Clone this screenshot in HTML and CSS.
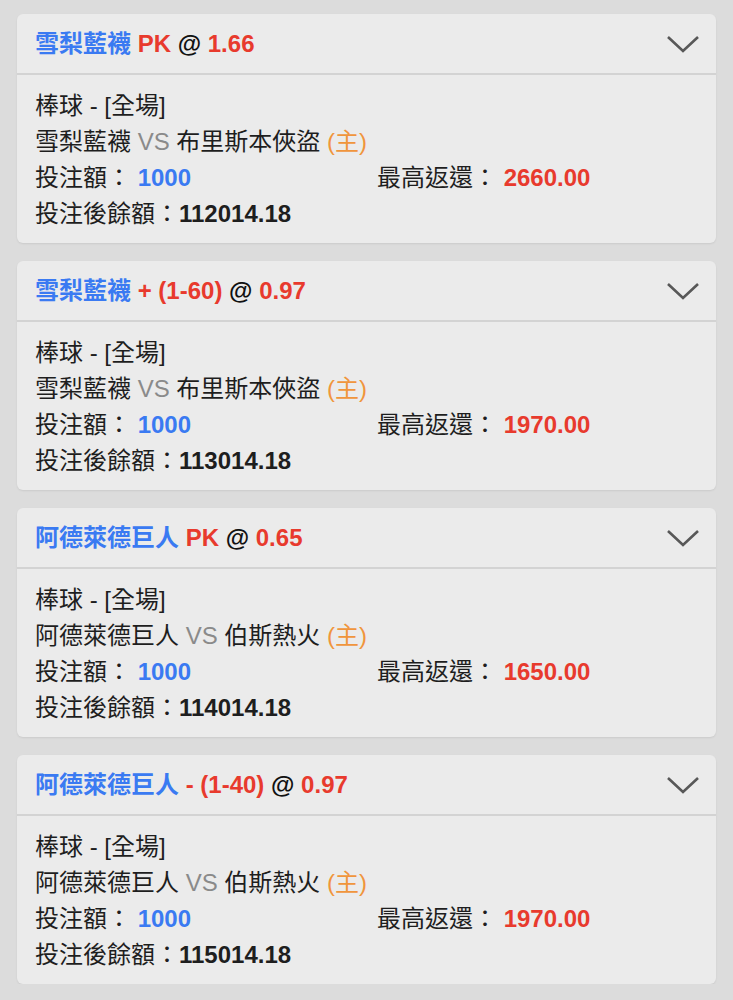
FILE: index.html
```html
<!DOCTYPE html>
<html lang="zh-Hant">
<head>
<meta charset="utf-8">
<link rel="stylesheet" href="styles.css">
</head>
<body>
<div class="list">
  <div class="card">
    <div class="head">
      <div class="title"><span class="blue">雪梨藍襪</span> <span class="red">PK</span> <span class="dark">@</span> <span class="red">1.66</span></div>
      <svg class="chev" viewBox="0 0 34 20" width="34" height="20"><path d="M2 3 L17 17 L32 3" fill="none" stroke="#585858" stroke-width="2.6"/></svg>
    </div>
    <div class="body">
      <div class="line">棒球 - [全場]</div>
      <div class="line">雪梨藍襪 <span class="vs">VS</span> 布里斯本俠盜 <span class="home">(主)</span></div>
      <div class="grid">
        <div class="line">投注額： <b class="blue">1000</b></div>
        <div class="line">最高返還： <b class="red">2660.00</b></div>
      </div>
      <div class="line">投注後餘額：<b>112014.18</b></div>
    </div>
  </div>

  <div class="card">
    <div class="head">
      <div class="title"><span class="blue">雪梨藍襪</span> <span class="red">+ (1-60)</span> <span class="dark">@</span> <span class="red">0.97</span></div>
      <svg class="chev" viewBox="0 0 34 20" width="34" height="20"><path d="M2 3 L17 17 L32 3" fill="none" stroke="#585858" stroke-width="2.6"/></svg>
    </div>
    <div class="body">
      <div class="line">棒球 - [全場]</div>
      <div class="line">雪梨藍襪 <span class="vs">VS</span> 布里斯本俠盜 <span class="home">(主)</span></div>
      <div class="grid">
        <div class="line">投注額： <b class="blue">1000</b></div>
        <div class="line">最高返還： <b class="red">1970.00</b></div>
      </div>
      <div class="line">投注後餘額：<b>113014.18</b></div>
    </div>
  </div>

  <div class="card">
    <div class="head">
      <div class="title"><span class="blue">阿德萊德巨人</span> <span class="red">PK</span> <span class="dark">@</span> <span class="red">0.65</span></div>
      <svg class="chev" viewBox="0 0 34 20" width="34" height="20"><path d="M2 3 L17 17 L32 3" fill="none" stroke="#585858" stroke-width="2.6"/></svg>
    </div>
    <div class="body">
      <div class="line">棒球 - [全場]</div>
      <div class="line">阿德萊德巨人 <span class="vs">VS</span> 伯斯熱火 <span class="home">(主)</span></div>
      <div class="grid">
        <div class="line">投注額： <b class="blue">1000</b></div>
        <div class="line">最高返還： <b class="red">1650.00</b></div>
      </div>
      <div class="line">投注後餘額：<b>114014.18</b></div>
    </div>
  </div>

  <div class="card">
    <div class="head">
      <div class="title"><span class="blue">阿德萊德巨人</span> <span class="red">- (1-40)</span> <span class="dark">@</span> <span class="red">0.97</span></div>
      <svg class="chev" viewBox="0 0 34 20" width="34" height="20"><path d="M2 3 L17 17 L32 3" fill="none" stroke="#585858" stroke-width="2.6"/></svg>
    </div>
    <div class="body">
      <div class="line">棒球 - [全場]</div>
      <div class="line">阿德萊德巨人 <span class="vs">VS</span> 伯斯熱火 <span class="home">(主)</span></div>
      <div class="grid">
        <div class="line">投注額： <b class="blue">1000</b></div>
        <div class="line">最高返還： <b class="red">1970.00</b></div>
      </div>
      <div class="line">投注後餘額：<b>115014.18</b></div>
    </div>
  </div>
</div>
</body>
</html>
```

FILE: styles.css
```css
html, body {
  margin: 0;
  padding: 0;
  background: #dcdcdc;
}
body {
  font-family: "Liberation Sans", "Noto Sans CJK TC", sans-serif;
  font-size: 24px;
  color: #1e1e1e;
}
.list {
  display: flex;
  flex-direction: column;
  gap: 18px;
  padding: 14px 17px 0 17px;
}
.card {
  background: #ebebeb;
  border-radius: 6px;
  box-shadow: 0 1px 2px rgba(0,0,0,0.08);
  overflow: hidden;
}
.head {
  height: 59px;
  display: flex;
  align-items: center;
  justify-content: space-between;
  padding: 0 16px 0 18px;
  border-bottom: 2px solid #d3d3d3;
}
.title {
  font-weight: bold;
  line-height: 1;
}
.chev {
  display: block;
  margin-top: 0;
}
.body {
  padding: 13px 18px 11px 18px;
}
.line {
  line-height: 36px;
  height: 36px;
  white-space: nowrap;
}
.grid {
  display: grid;
  grid-template-columns: 342px 1fr;
}
.blue { color: #3a7af2; }
.red { color: #e83a2d; }
.dark { color: #111; }
.vs { color: #8a8a8a; }
.home { color: #f0953c; }
b { font-weight: bold; }
```
